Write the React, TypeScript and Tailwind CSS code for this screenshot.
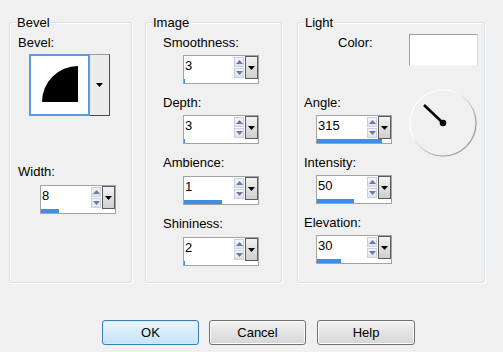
import React from "react";

function SpinArrow({ up }: { up?: boolean }) {
  return (
    <div className="flex h-[10px] w-[10px] items-center justify-center border border-[#c9cfdc] bg-gradient-to-b from-[#f3f5fa] to-[#dfe3ee]">
      <svg width="7" height="4" viewBox="0 0 7 4">
        {up ? (
          <polygon points="0,4 7,4 3.5,0" fill="#6a78a8" />
        ) : (
          <polygon points="0,0 7,0 3.5,4" fill="#6a78a8" />
        )}
      </svg>
    </div>
  );
}

function DropBtn() {
  return (
    <div className="flex h-full w-[13px] items-center justify-center border border-[#5a5a5a] bg-gradient-to-b from-[#f2f2f2] to-[#cfcfcf]">
      <svg width="7" height="4" viewBox="0 0 7 4">
        <polygon points="0,0 7,0 3.5,4" fill="#000" />
      </svg>
    </div>
  );
}

function Spin({ value, pct }: { value: string; pct: number }) {
  return (
    <div className="flex h-[29px] w-[76px] flex-col border border-[#a3a3a3] bg-white">
      <div className="flex h-[23px]">
        <div className="flex-1 pl-[1px] pt-[2px] text-[13px] leading-[15px] text-black">{value}</div>
        <div className="flex flex-col gap-[1px] pr-[1px] pt-[1px]">
          <SpinArrow up />
          <SpinArrow />
        </div>
        <DropBtn />
      </div>
      <div className="h-[4px] bg-white">
        <div className="h-full bg-[#3c8fe4]" style={{ width: `${pct}%` }} />
      </div>
    </div>
  );
}

function Group({
  title,
  width,
  children,
}: {
  title: string;
  width: string;
  children: React.ReactNode;
}) {
  return (
    <div
      className={`relative h-[261px] ${width} rounded-[3px] border border-[#d5dfe5] shadow-[inset_1px_1px_0_#ffffff,1px_1px_0_#ffffff]`}
    >
      <span className="absolute -top-[8px] left-[6px] bg-[#f0f0f0] px-[1px] text-[13px] leading-[15px] text-black">
        {title}
      </span>
      {children}
    </div>
  );
}

function Label({ children, className = "" }: { children: React.ReactNode; className?: string }) {
  return <div className={`text-[13px] leading-[15px] text-black ${className}`}>{children}</div>;
}

export default function App() {
  return (
    <div
      className="flex h-[352px] w-[503px] flex-col bg-[#f0f0f0] pl-[9px] pt-[22px]"
      style={{ fontFamily: '"Liberation Sans", Arial, sans-serif' }}
    >
      <div className="flex">
        {/* Bevel */}
        <Group title="Bevel" width="w-[123px]">
          <div className="flex flex-col pl-[8px] pt-[12px]">
            <Label>Bevel:</Label>
            <div className="ml-[11px] mt-[4px] flex h-[62px] w-[81px]">
              <div className="h-[62px] w-[61px] border-2 border-[#5b9bd8] bg-white">
                <svg width="57" height="58" viewBox="0 0 57 58">
                  <path d="M11 46 A36 36 0 0 1 47 10 L47 46 Z" fill="#000" />
                </svg>
              </div>
              <div className="flex flex-1 items-center justify-center border-y border-r border-y-[#9a9a9a] border-r-[#4a4a4a] border-b-[#4a4a4a] bg-[#ececec]">
                <svg width="7" height="4" viewBox="0 0 7 4">
                  <polygon points="0,0 7,0 3.5,4" fill="#000" />
                </svg>
              </div>
            </div>
            <Label className="mt-[48px]">Width:</Label>
            <div className="ml-[22px] mt-[6px]">
              <Spin value="8" pct={24} />
            </div>
          </div>
        </Group>

        {/* Image */}
        <div className="ml-[13px]">
          <Group title="Image" width="w-[137px]">
            <div className="flex flex-col pl-[17px] pt-[12px]">
              <Label>Smoothness:</Label>
              <div className="ml-[20px] mt-[5px]">
                <Spin value="3" pct={2} />
              </div>
              <Label className="mt-[11px]">Depth:</Label>
              <div className="ml-[20px] mt-[5px]">
                <Spin value="3" pct={1} />
              </div>
              <Label className="mt-[11px]">Ambience:</Label>
              <div className="ml-[20px] mt-[6px]">
                <Spin value="1" pct={51} />
              </div>
              <Label className="mt-[11px]">Shininess:</Label>
              <div className="ml-[20px] mt-[6px]">
                <Spin value="2" pct={1} />
              </div>
            </div>
          </Group>
        </div>

        {/* Light */}
        <div className="ml-[15px]">
          <Group title="Light" width="w-[188px]">
            <div className="flex flex-col pl-[6px] pt-[11px]">
              <div className="flex items-start">
                <Label className="ml-[34px] mt-[1px] w-[71px]">Color:</Label>
                <div className="h-[32px] w-[69px] border border-[#a0a0a0] border-b-[#f4f4f4] border-r-[#d8d8d8] bg-white" />
              </div>
              <div className="mt-[22px] flex items-start">
                <div className="flex w-[104px] flex-col pt-[7px]">
                  <Label>Angle:</Label>
                  <div className="ml-[12px] mt-[5px]">
                    <Spin value="315" pct={88} />
                  </div>
                  <Label className="mt-[11px]">Intensity:</Label>
                  <div className="ml-[12px] mt-[5px]">
                    <Spin value="50" pct={50} />
                  </div>
                  <Label className="mt-[11px]">Elevation:</Label>
                  <div className="ml-[12px] mt-[5px]">
                    <Spin value="30" pct={33} />
                  </div>
                </div>
                <svg width="72" height="72" viewBox="0 0 72 72">
                  <defs>
                    <linearGradient id="ring" x1="0" y1="0" x2="1" y2="1">
                      <stop offset="0.35" stopColor="#ffffff" />
                      <stop offset="0.75" stopColor="#9a9a9a" />
                    </linearGradient>
                  </defs>
                  <circle cx="35" cy="35" r="33" fill="#f0f0f0" stroke="url(#ring)" strokeWidth="1.2" />
                  <line x1="16" y1="17" x2="35" y2="35" stroke="#000" strokeWidth="2.6" />
                  <circle cx="35" cy="35" r="3.3" fill="#000" />
                </svg>
              </div>
            </div>
          </Group>
        </div>
      </div>

      <div className="ml-[93px] mt-[37px] flex gap-[10px]">
        <button className="h-[25px] w-[97px] rounded-[3px] border border-[#3c7fb1] bg-gradient-to-b from-[#eaf6fd] to-[#c4e3f7] text-[13px] text-black shadow-[inset_0_0_0_1px_#d0ecfb]">
          OK
        </button>
        <button className="h-[25px] w-[97px] rounded-[3px] border border-[#707070] bg-gradient-to-b from-[#f2f2f2] to-[#d6d6d6] text-[13px] text-black shadow-[inset_0_0_0_1px_#fcfcfc]">
          Cancel
        </button>
        <button className="ml-[1px] h-[25px] w-[98px] rounded-[3px] border border-[#707070] bg-gradient-to-b from-[#f2f2f2] to-[#d6d6d6] text-[13px] text-black shadow-[inset_0_0_0_1px_#fcfcfc]">
          Help
        </button>
      </div>
    </div>
  );
}
